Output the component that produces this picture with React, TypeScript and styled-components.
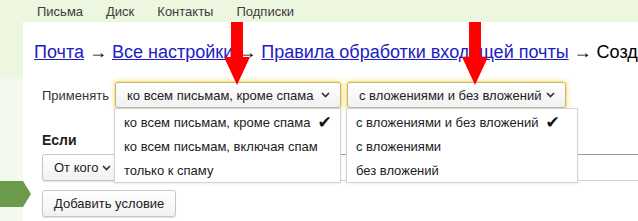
import React from "react"
import styled, { createGlobalStyle } from "styled-components"

const GlobalStyle = createGlobalStyle`
  html, body {
    margin: 0;
    padding: 0;
    background: #f3f9ec;
  }
  body {
    font-family: "Liberation Sans", Arial, sans-serif;
  }
`

const navItems = ["Письма", "Диск", "Контакты", "Подписки"]

const applyOptions = [
  "ко всем письмам, кроме спама",
  "ко всем письмам, включая спам",
  "только к спаму",
]

const attachOptions = ["с вложениями и без вложений", "с вложениями", "без вложений"]

const Chevron = () => (
  <svg width="9" height="6" viewBox="0 0 9 6">
    <polyline points="1,1 4.5,4.5 8,1" fill="none" stroke="#333" strokeWidth="1.7" />
  </svg>
)

const RedArrow = ({ left }: { left: number }) => (
  <ArrowBox style={{ left }}>
    <svg width="28" height="64" viewBox="0 0 28 64">
      <polygon points="8,0 20,0 20,35 27,35 14,63 1,35 8,35" fill="#ff0000" />
    </svg>
  </ArrowBox>
)

interface MenuProps {
  options: string[]
  width: number
}

const Menu = ({ options, width }: MenuProps) => (
  <MenuBox $width={width}>
    {options.map((o, i) => (
      <MenuItem key={o}>
        {o}
        {i === 0 && <Check>✔</Check>}
      </MenuItem>
    ))}
  </MenuBox>
)

const App = () => {
  return (
    <Page>
      <GlobalStyle />
      <TopNav>
        {navItems.map((n) => (
          <NavItem key={n}>{n}</NavItem>
        ))}
      </TopNav>
      <Main>
        <Side />
        <Panel>
          <Breadcrumb>
            <Link>Почта</Link> → <Link>Все настройки</Link> →{" "}
            <Link>Правила обработки входящей почты</Link> → Создание правила
          </Breadcrumb>
          <Form>
            <ApplyRow>
              <Label>Применять</Label>
              <SelectWrap>
                <Select $width={226} $focused>
                  ко всем письмам, кроме спама <Chevron />
                </Select>
                <Menu options={applyOptions} width={227} />
              </SelectWrap>
              <SelectWrap>
                <Select $width={219} $focused>
                  с вложениями и без вложений <Chevron />
                </Select>
                <Menu options={attachOptions} width={232} />
              </SelectWrap>
            </ApplyRow>
            <IfTitle>Если</IfTitle>
            <ConditionRow>
              <Select $width={80}>
                От кого <Chevron />
              </Select>
              <Select $width={110} />
              <TextInput />
            </ConditionRow>
            <AddButton>Добавить условие</AddButton>
          </Form>
        </Panel>
      </Main>
      <GreenTab>
        <svg width="32" height="26" viewBox="0 0 32 26">
          <polygon points="0,0 23,0 31,13 23,26 0,26" fill="#6a9a4a" />
        </svg>
      </GreenTab>
      <RedArrow left={223} />
      <RedArrow left={461} />
    </Page>
  )
}

export default App

const Page = styled.div`
  position: relative;
  width: 638px;
  height: 221px;
  overflow: hidden;
  background: #f3f9ec;
`

const TopNav = styled.div`
  display: flex;
  align-items: center;
  gap: 23px;
  height: 22px;
  padding-left: 37px;
  background: #edf6de;
`

const NavItem = styled.span`
  font-size: 13px;
  color: #3d3d3d;
`

const Main = styled.div`
  display: flex;
  height: 199px;
`

const Side = styled.div`
  width: 23px;
  flex-shrink: 0;
  background: linear-gradient(#edf6de 0, #edf6de 55px, #f3f9ec 55px);
`

const Panel = styled.div`
  flex: 1;
  min-width: 0;
  background: #fff;
  padding: 20px 0 0 11px;
`

const Breadcrumb = styled.div`
  font-size: 18px;
  line-height: 20px;
  color: #000;
  white-space: nowrap;
  overflow: hidden;
`

const Link = styled.a`
  color: #2020c0;
  text-decoration: underline;
`

const Form = styled.div`
  padding-left: 8px;
`

const ApplyRow = styled.div`
  display: flex;
  align-items: center;
  margin-top: 20px;
  height: 26px;
`

const Label = styled.span`
  font-size: 13px;
  color: #333;
  margin-right: 6px;
`

const SelectWrap = styled.div`
  position: relative;
  margin-right: 6px;
`

const Select = styled.div<{ $width: number; $focused?: boolean }>`
  box-sizing: border-box;
  display: flex;
  align-items: center;
  justify-content: space-between;
  width: ${(p) => p.$width}px;
  height: ${(p) => (p.$focused ? 26 : 27)}px;
  padding: 0 10px 0 11px;
  font-size: 13px;
  color: #222;
  white-space: nowrap;
  border: 1px solid ${(p) => (p.$focused ? "#bdb59a" : "#c6c6c6")};
  border-radius: 3px;
  background: linear-gradient(#fff, #f1f1f1);
  box-shadow: ${(p) =>
    p.$focused
      ? "0 0 0 1px rgba(255, 220, 90, 0.55), 0 0 5px 1px rgba(255, 214, 60, 0.7)"
      : "0 1px 1px rgba(0, 0, 0, 0.12)"};
`

const MenuBox = styled.div<{ $width: number }>`
  position: absolute;
  top: 26px;
  left: -1px;
  z-index: 2;
  box-sizing: border-box;
  width: ${(p) => p.$width}px;
  padding-top: 1px;
  background: #fff;
  border: 1px solid #d4d4d4;
  box-shadow: 0 1px 2px rgba(0, 0, 0, 0.08);
`

const MenuItem = styled.div`
  display: flex;
  align-items: center;
  height: 24px;
  padding-left: 9px;
  font-size: 13px;
  color: #222;
  white-space: nowrap;
`

const Check = styled.span`
  margin-left: 7px;
  font-family: "DejaVu Sans", sans-serif;
  font-size: 17px;
  color: #111;
`

const IfTitle = styled.div`
  margin-top: 22px;
  font-size: 14px;
  line-height: 20px;
  font-weight: bold;
  color: #222;
`

const ConditionRow = styled.div`
  display: flex;
  align-items: center;
  gap: 8px;
  margin-top: 4px;
`

const TextInput = styled.div`
  flex: 1;
  height: 27px;
  box-sizing: border-box;
  margin-right: -20px;
  border: 1px solid #d0d0d0;
  border-top-color: #9c9c9c;
`

const AddButton = styled.div`
  box-sizing: border-box;
  display: inline-flex;
  align-items: center;
  width: 134px;
  height: 27px;
  margin-top: 9px;
  padding-left: 11px;
  font-size: 13px;
  color: #222;
  border: 1px solid #c6c6c6;
  border-radius: 3px;
  background: linear-gradient(#fff, #f1f1f1);
  box-shadow: 0 1px 1px rgba(0, 0, 0, 0.12);
`

const GreenTab = styled.div`
  position: absolute;
  left: 0;
  top: 181px;
  line-height: 0;
`

const ArrowBox = styled.div`
  position: absolute;
  top: 22px;
  z-index: 5;
  line-height: 0;
`
